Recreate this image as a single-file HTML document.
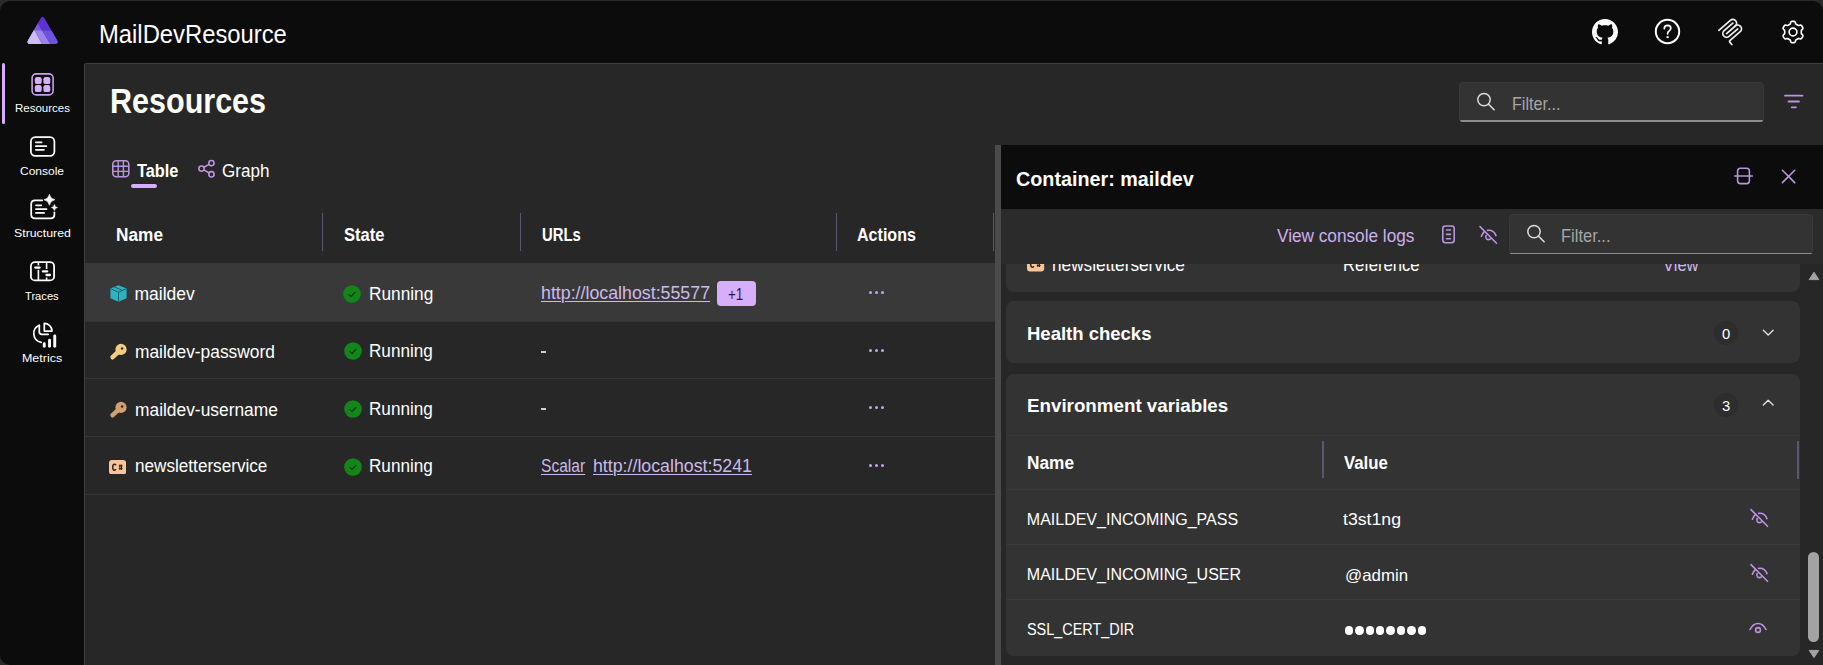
<!DOCTYPE html>
<html><head><meta charset="utf-8">
<style>
html,body{margin:0;padding:0;}
body{width:1823px;height:665px;overflow:hidden;position:relative;background:#2a2a2a;font-family:"Liberation Sans",sans-serif;color:#fff;}
.abs{position:absolute;}
.t{position:absolute;white-space:nowrap;line-height:1;}
.link{text-decoration:underline;text-decoration-thickness:1px;text-underline-offset:2px;}
</style></head>
<body>
<div class="abs" style="left:0px;top:1px;width:1823px;height:664px;background:#0c0c0c;border-radius:10px;"></div>
<div class="abs" style="left:84px;top:63px;width:1739px;height:602px;background:#272727;border-top:1px solid #3d3d3d;border-left:1px solid #3f3f3f;border-top-left-radius:2px;box-sizing:border-box;"></div>
<svg class="abs" style="left:0;top:0" width="70" height="55" viewBox="0 0 70 55">
<defs><clipPath id="tri"><path d="M40.46 18.73 Q42.60 15.00 44.74 18.73 L57.06 40.17 Q59.20 43.90 54.90 43.90 L30.30 43.90 Q26.00 43.90 28.14 40.17 Z"/></clipPath></defs>
<g clip-path="url(#tri)">
<rect x="0" y="0" width="70" height="55" fill="#5a32d6"/>
<path d="M0 0H24L54 50H0Z" fill="#7a5be0"/>
<rect x="0" y="30.6" width="70" height="25" fill="#7152de"/>
<path d="M0 30.6H42.2L54 50H0Z" fill="#9c85ea"/>
<path d="M0 30.6H34.9L45.3 50H0Z" fill="#cbbcf3"/>
<path d="M24 0L54 50M34.9 30.6L45.3 50" stroke="#3d2390" stroke-width="0.6" opacity="0.5"/>
</g></svg>
<div class="t " style="left:99.20px;top:22.39px;font-size:25px;color:#fff;transform:scaleX(0.9521);transform-origin:0 0;">MailDevResource</div>
<svg class="abs" style="left:1591.5px;top:18.5px" width="26" height="26" viewBox="0 0 16 16"><path fill="#ffffff" d="M8 0C3.58 0 0 3.58 0 8c0 3.54 2.29 6.53 5.47 7.59.4.07.55-.17.55-.38 0-.19-.01-.82-.01-1.49-2.01.37-2.53-.49-2.69-.94-.09-.23-.48-.94-.82-1.13-.28-.15-.68-.52-.01-.53.63-.01 1.08.58 1.23.82.72 1.21 1.87.87 2.33.66.07-.52.28-.87.51-1.07-1.78-.2-3.640-.89-3.64-3.950 0-.87.31-1.59.82-2.15-.08-.2-.36-1.02.08-2.12 0 0 .67-.21 2.2.82.64-.18 1.32-.27 2-.27.68 0 1.36.09 2 .27 1.53-1.04 2.2-.82 2.2-.82.44 1.1.16 1.92.08 2.12.51.56.82 1.27.82 2.15 0 3.07-1.87 3.75-3.65 3.95.29.25.54.73.54 1.48 0 1.07-.01 1.93-.01 2.2 0 .21.15.46.55.38A8.013 8.013 0 0016 8c0-4.42-3.58-8-8-8z"/></svg>
<svg class="abs" style="left:1653px;top:17px" width="29" height="29" viewBox="0 0 29 29"><circle cx="14.5" cy="14.5" r="11.7" fill="none" stroke="#ffffff" stroke-width="2"/>
<path d="M11.3 11.5 Q11.4 8.3 14.6 8.3 Q17.8 8.4 17.8 11.1 Q17.8 12.9 16.1 14 Q14.6 14.9 14.6 16.8" fill="none" stroke="#ffffff" stroke-width="1.75" stroke-linecap="round"/>
<circle cx="14.6" cy="20.1" r="1.2" fill="#ffffff"/></svg>
<svg class="abs" style="left:1710px;top:12px" width="40" height="40" viewBox="1710 12 40 40"><g transform="translate(1719.1 30.1) rotate(-40.87)" fill="none" stroke="#ececec" stroke-width="1.75" stroke-linecap="round" stroke-linejoin="round"><path d="M-0.3 0H14.9A3.75 3.75 0 0 1 14.9 7.5A3.75 3.75 0 0 1 14.9 15H1.6Q0.2 15 0.2 16.4V19.2"/><path d="M14.9 7.5H3.4"/><path d="M14.9 3.75H3.4A3.75 3.75 0 0 0 3.4 11.25H14.9"/></g></svg>
<svg class="abs" style="left:1780.5px;top:19.5px" width="24" height="24" viewBox="0 0 24 24"><path fill="none" stroke="#ffffff" stroke-width="1.65" stroke-linejoin="round" d="M20.30 12.00 L20.29 12.43 L20.28 12.87 L20.29 13.31 L20.50 13.81 L21.18 14.46 L21.80 15.19 L21.90 15.80 L21.75 16.34 L21.53 16.86 L21.27 17.35 L20.97 17.83 L20.64 18.28 L20.24 18.67 L19.66 18.90 L18.72 18.72 L17.82 18.46 L17.28 18.52 L16.89 18.73 L16.52 18.96 L16.15 19.19 L15.77 19.40 L15.38 19.60 L15.01 19.84 L14.69 20.27 L14.46 21.18 L14.14 22.08 L13.66 22.47 L13.12 22.62 L12.56 22.68 L12.00 22.70 L11.44 22.68 L10.88 22.62 L10.34 22.47 L9.86 22.08 L9.54 21.18 L9.31 20.27 L8.99 19.84 L8.62 19.60 L8.23 19.40 L7.85 19.19 L7.48 18.96 L7.11 18.73 L6.72 18.52 L6.18 18.46 L5.28 18.72 L4.34 18.90 L3.76 18.67 L3.36 18.28 L3.03 17.83 L2.73 17.35 L2.47 16.86 L2.25 16.34 L2.10 15.80 L2.20 15.19 L2.82 14.46 L3.50 13.81 L3.71 13.31 L3.72 12.87 L3.71 12.43 L3.70 12.00 L3.71 11.57 L3.72 11.13 L3.71 10.69 L3.50 10.19 L2.82 9.54 L2.20 8.81 L2.10 8.20 L2.25 7.66 L2.47 7.14 L2.73 6.65 L3.03 6.17 L3.36 5.72 L3.76 5.33 L4.34 5.10 L5.28 5.28 L6.18 5.54 L6.72 5.48 L7.11 5.27 L7.48 5.04 L7.85 4.81 L8.23 4.60 L8.62 4.40 L8.99 4.16 L9.31 3.73 L9.54 2.82 L9.86 1.92 L10.34 1.53 L10.88 1.38 L11.44 1.32 L12.00 1.30 L12.56 1.32 L13.12 1.38 L13.66 1.53 L14.14 1.92 L14.46 2.82 L14.69 3.73 L15.01 4.16 L15.38 4.40 L15.77 4.60 L16.15 4.81 L16.52 5.04 L16.89 5.27 L17.28 5.48 L17.82 5.54 L18.72 5.28 L19.66 5.10 L20.24 5.33 L20.64 5.72 L20.97 6.17 L21.27 6.65 L21.53 7.14 L21.75 7.66 L21.90 8.20 L21.80 8.81 L21.18 9.54 L20.50 10.19 L20.29 10.69 L20.28 11.13 L20.29 11.57Z"/><circle cx="12" cy="12" r="3.9" fill="none" stroke="#ffffff" stroke-width="1.65"/></svg>
<div class="abs" style="left:2px;top:63px;width:3px;height:61px;background:#d6aefc;border-radius:2px;"></div>
<svg class="abs" style="left:25px;top:66px" width="35" height="35" viewBox="25 66 35 35"><rect x="32.1" y="73.9" width="21" height="21" rx="4.2" fill="none" stroke="#c9a0ee" stroke-width="1.6"/>
<rect x="34.8" y="77.1" width="6.9" height="7" rx="2.2" fill="#d6aefc"/><rect x="43.4" y="77.1" width="6.9" height="7" rx="2.2" fill="#d6aefc"/>
<rect x="34.8" y="85.1" width="6.9" height="7" rx="2.2" fill="#d6aefc"/><rect x="43.4" y="85.1" width="6.9" height="7" rx="2.2" fill="#d6aefc"/></svg>
<div class="t " style="left:15.00px;top:103.42px;font-size:11.5px;color:#fff;">Resources</div>
<svg class="abs" style="left:25px;top:128px" width="35" height="35" viewBox="25 128 35 35"><rect x="30.9" y="137.1" width="23.5" height="18.7" rx="4.3" fill="none" stroke="#ffffff" stroke-width="1.75"/>
<path d="M35.9 142.3H41.6M35.9 146.2H46.3M35.9 149.8H43.9" stroke="#ffffff" stroke-width="1.75" stroke-linecap="round"/></svg>
<div class="t " style="left:20.30px;top:165.62px;font-size:11.5px;color:#fff;transform:scaleX(1.0425);transform-origin:0 0;">Console</div>
<svg class="abs" style="left:25px;top:190px" width="37" height="37" viewBox="25 190 37 37"><path d="M42.2 200.4H35Q31.2 200.4 31.2 204.2V214.5Q31.2 218.3 35 218.3H50.6Q54.4 218.3 54.4 214.5V212.3" fill="none" stroke="#ffffff" stroke-width="1.75" stroke-linecap="round"/>
<path d="M36 205.3H41.3M36 209.2H46.5M36 212.9H44.1" stroke="#ffffff" stroke-width="1.75" stroke-linecap="round"/>
<path d="M49.4 194.3Q50.3 198.9 54.9 199.8Q50.3 200.7 49.4 205.3Q48.5 200.7 43.9 199.8Q48.5 198.9 49.4 194.3Z" fill="#ffffff" stroke="#ffffff" stroke-width="0.6" stroke-linejoin="round"/>
<path d="M54.4 204.4Q54.9 207 57.5 207.5Q54.9 208 54.4 210.6Q53.9 208 51.3 207.5Q53.9 207 54.4 204.4Z" fill="#ffffff" stroke="#ffffff" stroke-width="0.5" stroke-linejoin="round"/></svg>
<div class="t " style="left:13.50px;top:228.32px;font-size:11.5px;color:#fff;transform:scaleX(1.0721);transform-origin:0 0;">Structured</div>
<svg class="abs" style="left:25px;top:255px" width="35" height="35" viewBox="25 255 35 35"><rect x="30.9" y="262.2" width="23.2" height="18.2" rx="4" fill="none" stroke="#ffffff" stroke-width="1.8"/>
<path d="M38.4 262.2V265.6M38.4 269.7V280.4M46.6 262.2V268.9M46.6 277.4V280.4" stroke="#ffffff" stroke-width="1.6"/>
<path d="M35.3 267.6H39.6M42.9 271.3H47.2M46.5 275H49.9" stroke="#ffffff" stroke-width="2.3" stroke-linecap="round"/></svg>
<div class="t " style="left:25.00px;top:290.62px;font-size:11.5px;color:#fff;transform:scaleX(0.9703);transform-origin:0 0;">Traces</div>
<svg class="abs" style="left:25px;top:315px" width="37" height="37" viewBox="25 315 37 37"><path d="M39.3 325.3A8.9 8.9 0 0 0 41.2 342.3" fill="none" stroke="#ffffff" stroke-width="1.75" stroke-linecap="round"/>
<path d="M39.3 325.3V331.8Q39.3 334.3 41.8 334.3H48.2" fill="none" stroke="#ffffff" stroke-width="1.75" stroke-linecap="round" stroke-linejoin="round"/>
<path d="M44.3 331V323.4A7.7 7.7 0 0 1 52 331Z" fill="none" stroke="#ffffff" stroke-width="1.75" stroke-linejoin="round"/>
<rect x="42.8" y="342.2" width="2.9" height="5.6" rx="1.45" fill="#ffffff"/><rect x="48.1" y="338.8" width="2.9" height="9" rx="1.45" fill="#ffffff"/><rect x="53.3" y="334.5" width="2.9" height="13.3" rx="1.45" fill="#ffffff"/></svg>
<div class="t " style="left:22.10px;top:353.02px;font-size:11.5px;color:#fff;transform:scaleX(1.0829);transform-origin:0 0;">Metrics</div>
<div class="t " style="left:110.20px;top:84.30px;font-size:35.5px;color:#fff;font-weight:bold;transform:scaleX(0.8597);transform-origin:0 0;">Resources</div>
<div class="abs" style="left:1459px;top:81.5px;width:304.5px;height:40.2px;background:#333333;border-radius:4px;border:1px solid #3a3a3a;box-sizing:border-box;"></div>
<div class="abs" style="left:1460px;top:120.2px;width:302.5px;height:1.3999999999999915px;background:#8c8c8c;border-radius:0 0 3px 3px;"></div>
<svg class="abs" style="left:1475px;top:91px" width="22" height="22" viewBox="0 0 22 22"><circle cx="9" cy="8.6" r="6.2" fill="none" stroke="#dcdcdc" stroke-width="1.5"/><path d="M13.6 13.2L19.1 18.8" stroke="#dcdcdc" stroke-width="1.6" stroke-linecap="round"/></svg>
<div class="t " style="left:1511.60px;top:95.64px;font-size:17.5px;color:#a6a6a6;transform:scaleX(0.9219);transform-origin:0 0;">Filter...</div>
<svg class="abs" style="left:1783px;top:93px" width="22" height="17" viewBox="0 0 22 17"><path d="M2 2.7h17.5M5.5 8.5h10.5M8.7 14.3h4.2" stroke="#bb93de" stroke-width="1.8" stroke-linecap="round"/></svg>
<svg class="abs" style="left:111px;top:159px" width="20" height="20" viewBox="0 0 20 20"><rect x="1.8" y="1.8" width="16" height="16" rx="3.5" fill="none" stroke="#bb93de" stroke-width="1.6"/>
<path d="M7.2 1.8V17.8M12.4 1.8V17.8M1.8 7.2H17.8M1.8 12.4H17.8" stroke="#bb93de" stroke-width="1.4"/></svg>
<div class="t " style="left:136.50px;top:162.84px;font-size:17.5px;color:#fff;font-weight:bold;transform:scaleX(0.9336);transform-origin:0 0;">Table</div>
<div class="abs" style="left:131px;top:184px;width:26px;height:4px;background:#d6aefc;border-radius:2px;"></div>
<svg class="abs" style="left:197px;top:158px" width="20" height="22" viewBox="0 0 20 22"><circle cx="14.45" cy="5.1" r="2.65" fill="none" stroke="#bb93de" stroke-width="1.6"/><circle cx="4.5" cy="10.6" r="2.65" fill="none" stroke="#bb93de" stroke-width="1.6"/><circle cx="14.45" cy="16.3" r="2.65" fill="none" stroke="#bb93de" stroke-width="1.6"/>
<path d="M6.9 9.3L12.1 6.4M6.9 11.9L12.1 15" stroke="#bb93de" stroke-width="1.6"/></svg>
<div class="t " style="left:222.40px;top:162.94px;font-size:17.5px;color:#fff;transform:scaleX(0.9743);transform-origin:0 0;">Graph</div>
<div class="t " style="left:115.60px;top:226.94px;font-size:17.5px;color:#fff;font-weight:bold;transform:scaleX(0.9856);transform-origin:0 0;">Name</div>
<div class="t " style="left:343.50px;top:226.94px;font-size:17.5px;color:#fff;font-weight:bold;transform:scaleX(0.9442);transform-origin:0 0;">State</div>
<div class="t " style="left:541.50px;top:226.94px;font-size:17.5px;color:#fff;font-weight:bold;transform:scaleX(0.8495);transform-origin:0 0;">URLs</div>
<div class="t " style="left:857.30px;top:226.94px;font-size:17.5px;color:#fff;font-weight:bold;transform:scaleX(0.9183);transform-origin:0 0;">Actions</div>
<div class="abs" style="left:322.1px;top:213px;width:1.1999999999999886px;height:37.5px;background:#5e5572;"></div>
<div class="abs" style="left:520.1px;top:213px;width:1.1999999999999318px;height:37.5px;background:#5e5572;"></div>
<div class="abs" style="left:836.1px;top:213px;width:1.1999999999999318px;height:37.5px;background:#5e5572;"></div>
<div class="abs" style="left:993.1px;top:213px;width:1.1999999999999318px;height:37.5px;background:#5e5572;"></div>
<div class="abs" style="left:85px;top:263px;width:910px;height:58px;background:#393939;"></div>
<div class="abs" style="left:85px;top:321px;width:910px;height:1.3000000000000114px;background:#353535;"></div>
<div class="abs" style="left:85px;top:378px;width:910px;height:1.3000000000000114px;background:#353535;"></div>
<div class="abs" style="left:85px;top:436px;width:910px;height:1.3000000000000114px;background:#353535;"></div>
<div class="abs" style="left:85px;top:493.5px;width:910px;height:1.3000000000000114px;background:#353535;"></div>
<svg class="abs" style="left:109px;top:284px" width="19" height="19" viewBox="0 0 19 19"><path d="M9.5 1.2L17.6 4.6V14.2L9.5 17.8L1.4 14.2V4.6Z" fill="#2bb3c0"/><path d="M1.4 4.6L9.5 8.2L17.6 4.6M9.5 8.2V17.8" fill="none" stroke="#1b5f68" stroke-width="1"/><path d="M5.2 2.9L13.3 6.4" stroke="#1b5f68" stroke-width="0.9"/></svg>
<div class="t " style="left:134.50px;top:286.44px;font-size:17.5px;color:#fff;">maildev</div>
<svg class="abs" style="left:343.4px;top:284.6px" width="18" height="18" viewBox="0 0 18 18"><circle cx="9" cy="9" r="8.8" fill="#13861a"/><path d="M5.9 9.6L7.9 11.5L12 7.4" fill="none" stroke="#0b3f0d" stroke-width="1.3" stroke-linecap="round" stroke-linejoin="round"/></svg>
<div class="t " style="left:368.70px;top:285.94px;font-size:17.5px;color:#fff;transform:scaleX(0.9864);transform-origin:0 0;">Running</div>
<div class="t link" style="left:540.60px;top:284.94px;font-size:17.5px;color:#cdb9ea;transform:scaleX(1.0160);transform-origin:0 0;">http://localhost:55577</div>
<div class="abs" style="left:716.6px;top:281.4px;width:39.89999999999998px;height:24.80000000000001px;background:#d6aefc;border-radius:4px;"></div>
<div class="t " style="left:728.00px;top:286.61px;font-size:16px;color:#2b1d3d;transform:scaleX(0.8388);transform-origin:0 0;">+1</div>
<div class="abs" style="left:869.0px;top:290.5px;width:3.0px;height:3.0px;background:#c8a2ec;border-radius:50%;"></div>
<div class="abs" style="left:875.2px;top:290.5px;width:3.0px;height:3.0px;background:#c8a2ec;border-radius:50%;"></div>
<div class="abs" style="left:881.4px;top:290.5px;width:3.0px;height:3.0px;background:#c8a2ec;border-radius:50%;"></div>
<svg class="abs" style="left:108.5px;top:342px" width="20" height="20" viewBox="0 0 20 20"><circle cx="12" cy="7.4" r="5.6" fill="#f0d080"/><path d="M9.5 9.6L3.6 15.2" stroke="#f0d080" stroke-width="4.6" stroke-linecap="round"/><path d="M7.5 9.5L10.2 12.2" stroke="#f0d080" stroke-width="3"/><circle cx="13.1" cy="6.5" r="1.25" fill="#3a2a10"/></svg>
<div class="t " style="left:134.60px;top:343.54px;font-size:17.5px;color:#fff;transform:scaleX(0.9918);transform-origin:0 0;">maildev-password</div>
<svg class="abs" style="left:343.6px;top:342.3px" width="18" height="18" viewBox="0 0 18 18"><circle cx="9" cy="9" r="8.8" fill="#13861a"/><path d="M5.9 9.6L7.9 11.5L12 7.4" fill="none" stroke="#0b3f0d" stroke-width="1.3" stroke-linecap="round" stroke-linejoin="round"/></svg>
<div class="t " style="left:369.20px;top:343.24px;font-size:17.5px;color:#fff;transform:scaleX(0.9787);transform-origin:0 0;">Running</div>
<div class="abs" style="left:540.8px;top:351.2px;width:5.600000000000023px;height:1.5px;background:#cfcfcf;"></div>
<div class="abs" style="left:869.0px;top:348.5px;width:3.0px;height:3.0px;background:#c8a2ec;border-radius:50%;"></div>
<div class="abs" style="left:875.2px;top:348.5px;width:3.0px;height:3.0px;background:#c8a2ec;border-radius:50%;"></div>
<div class="abs" style="left:881.4px;top:348.5px;width:3.0px;height:3.0px;background:#c8a2ec;border-radius:50%;"></div>
<svg class="abs" style="left:108.5px;top:399.6px" width="20" height="20" viewBox="0 0 20 20"><circle cx="12" cy="7.4" r="5.6" fill="#d19f72"/><path d="M9.5 9.6L3.6 15.2" stroke="#d19f72" stroke-width="4.6" stroke-linecap="round"/><path d="M7.5 9.5L10.2 12.2" stroke="#d19f72" stroke-width="3"/><circle cx="13.1" cy="6.5" r="1.25" fill="#3a2a10"/></svg>
<div class="t " style="left:134.60px;top:401.54px;font-size:17.5px;color:#fff;transform:scaleX(0.9928);transform-origin:0 0;">maildev-username</div>
<svg class="abs" style="left:343.6px;top:400px" width="18" height="18" viewBox="0 0 18 18"><circle cx="9" cy="9" r="8.8" fill="#13861a"/><path d="M5.9 9.6L7.9 11.5L12 7.4" fill="none" stroke="#0b3f0d" stroke-width="1.3" stroke-linecap="round" stroke-linejoin="round"/></svg>
<div class="t " style="left:369.20px;top:400.94px;font-size:17.5px;color:#fff;transform:scaleX(0.9787);transform-origin:0 0;">Running</div>
<div class="abs" style="left:540.8px;top:408px;width:5.600000000000023px;height:1.5px;background:#cfcfcf;"></div>
<div class="abs" style="left:869.0px;top:406.1px;width:3.0px;height:3.0px;background:#c8a2ec;border-radius:50%;"></div>
<div class="abs" style="left:875.2px;top:406.1px;width:3.0px;height:3.0px;background:#c8a2ec;border-radius:50%;"></div>
<div class="abs" style="left:881.4px;top:406.1px;width:3.0px;height:3.0px;background:#c8a2ec;border-radius:50%;"></div>
<svg class="abs" style="left:109.3px;top:459.8px" width="17.2" height="14.5" viewBox="0 0 17.2 14.5"><rect x="0" y="0" width="17.2" height="14.5" rx="3" fill="#f8c49a"/><path d="M7 5.2Q6.6 4.3 5.5 4.3Q3.7 4.3 3.7 7.25Q3.7 10.2 5.5 10.2Q6.6 10.2 7 9.3" fill="none" stroke="#3b2616" stroke-width="1.5"/><path d="M9.8 5.9H13.6M9.8 8.5H13.6M10.9 4.4V10.1M12.5 4.4V10.1" stroke="#3b2616" stroke-width="1.1"/></svg>
<div class="t " style="left:134.60px;top:457.84px;font-size:17.5px;color:#fff;transform:scaleX(0.9794);transform-origin:0 0;">newsletterservice</div>
<svg class="abs" style="left:343.6px;top:457.5px" width="18" height="18" viewBox="0 0 18 18"><circle cx="9" cy="9" r="8.8" fill="#13861a"/><path d="M5.9 9.6L7.9 11.5L12 7.4" fill="none" stroke="#0b3f0d" stroke-width="1.3" stroke-linecap="round" stroke-linejoin="round"/></svg>
<div class="t " style="left:369.20px;top:458.44px;font-size:17.5px;color:#fff;transform:scaleX(0.9787);transform-origin:0 0;">Running</div>
<div class="t link" style="left:540.60px;top:458.44px;font-size:17.5px;color:#cdb9ea;transform:scaleX(0.8909);transform-origin:0 0;">Scalar</div>
<div class="t link" style="left:592.50px;top:458.44px;font-size:17.5px;color:#cdb9ea;transform:scaleX(1.0145);transform-origin:0 0;">http://localhost:5241</div>
<div class="abs" style="left:869.0px;top:463.9px;width:3.0px;height:3.0px;background:#c8a2ec;border-radius:50%;"></div>
<div class="abs" style="left:875.2px;top:463.9px;width:3.0px;height:3.0px;background:#c8a2ec;border-radius:50%;"></div>
<div class="abs" style="left:881.4px;top:463.9px;width:3.0px;height:3.0px;background:#c8a2ec;border-radius:50%;"></div>
<div class="abs" style="left:995px;top:144.6px;width:6px;height:520.4px;background:#4b4b4b;"></div>
<div class="abs" style="left:1001px;top:144.6px;width:822px;height:520.4px;background:#272727;"></div>
<div class="abs" style="left:1001px;top:144.6px;width:822px;height:64.4px;background:#0c0c0c;"></div>
<div class="t " style="left:1015.80px;top:169.84px;font-size:19.5px;color:#fff;font-weight:bold;transform:scaleX(1.0125);transform-origin:0 0;">Container: maildev</div>
<svg class="abs" style="left:1730px;top:163px" width="26" height="26" viewBox="1730 163 26 26"><rect x="1737.6" y="168.2" width="11.8" height="15.4" rx="2.8" fill="none" stroke="#bb93de" stroke-width="1.6"/><path d="M1734.8 176H1752.3" stroke="#bb93de" stroke-width="1.6" stroke-linecap="round"/></svg>
<svg class="abs" style="left:1778px;top:166px" width="21" height="21" viewBox="1778 166 21 21"><path d="M1782.4 170.3L1794.7 182.6M1794.7 170.3L1782.4 182.6" stroke="#bb93de" stroke-width="1.6" stroke-linecap="round"/></svg>
<div class="abs" style="left:1001px;top:209px;width:822px;height:55px;background:#2b2b2b;"></div>
<div class="t " style="left:1277.00px;top:227.94px;font-size:17.5px;color:#cdb0ec;transform:scaleX(0.9833);transform-origin:0 0;">View console logs</div>
<svg class="abs" style="left:1438px;top:222px" width="22" height="25" viewBox="1438 222 22 25"><rect x="1442.8" y="226" width="11.4" height="16.7" rx="2.6" fill="none" stroke="#bb93de" stroke-width="1.6"/><path d="M1446.5 230H1450.5M1446.5 234.4H1450.5M1446.5 238.7H1450.5" stroke="#bb93de" stroke-width="1.6" stroke-linecap="round"/></svg>
<svg class="abs" style="left:1478px;top:224.5px" width="20" height="20" viewBox="0 0 20 20"><path d="M2 1.6L18.5 18.3" stroke="#bb93de" stroke-width="1.6" stroke-linecap="round"/><path d="M3.4 11.2Q4.4 8.4 6.4 6.6M9.6 5.4Q15.6 4.6 18 10.6" fill="none" stroke="#bb93de" stroke-width="1.6" stroke-linecap="round"/><path d="M8.2 10.4Q7.2 12.4 8.4 13.8Q10.4 15.4 12.4 13.9" fill="none" stroke="#bb93de" stroke-width="1.6" stroke-linecap="round"/></svg>
<div class="abs" style="left:1508.6px;top:214.3px;width:304.20000000000005px;height:40.099999999999994px;background:#333333;border-radius:4px;border:1px solid #3a3a3a;box-sizing:border-box;"></div>
<div class="abs" style="left:1509.6px;top:252.9px;width:302.20000000000005px;height:1.4000000000000057px;background:#8c8c8c;border-radius:0 0 3px 3px;"></div>
<svg class="abs" style="left:1525px;top:223px" width="22" height="22" viewBox="0 0 22 22"><circle cx="9" cy="8.6" r="6.2" fill="none" stroke="#dcdcdc" stroke-width="1.5"/><path d="M13.6 13.2L19.1 18.8" stroke="#dcdcdc" stroke-width="1.6" stroke-linecap="round"/></svg>
<div class="t " style="left:1561.00px;top:227.94px;font-size:17.5px;color:#a6a6a6;transform:scaleX(0.9429);transform-origin:0 0;">Filter...</div>
<div class="abs" style="left:1001px;top:264px;width:822px;height:401px;overflow:hidden;">
<div class="abs" style="left:4.5px;top:-34px;width:794.0px;height:62px;background:#333333;border-radius:8px;"></div>
<svg class="abs" style="left:26.40000000000009px;top:-6.800000000000011px" width="17.2" height="14.5" viewBox="0 0 17.2 14.5"><rect x="0" y="0" width="17.2" height="14.5" rx="3" fill="#f8c49a"/><path d="M7 5.2Q6.6 4.3 5.5 4.3Q3.7 4.3 3.7 7.25Q3.7 10.2 5.5 10.2Q6.6 10.2 7 9.3" fill="none" stroke="#3b2616" stroke-width="1.5"/><path d="M9.8 5.9H13.6M9.8 8.5H13.6M10.9 4.4V10.1M12.5 4.4V10.1" stroke="#3b2616" stroke-width="1.1"/></svg>
<div class="t " style="left:50.80px;top:-6.76px;font-size:17.5px;color:#fff;transform:scaleX(0.9831);transform-origin:0 0;">newsletterservice</div>
<div class="t " style="left:342.40px;top:-6.76px;font-size:17.5px;color:#fff;transform:scaleX(0.9485);transform-origin:0 0;">Reference</div>
<div class="t " style="left:662.00px;top:-6.76px;font-size:17.5px;color:#cdb9ea;transform:scaleX(0.9435);transform-origin:0 0;">View</div>
<div class="abs" style="left:4.5px;top:37.2px;width:794.0px;height:62.099999999999994px;background:#333333;border-radius:8px;"></div>
<div class="t " style="left:26.00px;top:61.39px;font-size:18.5px;color:#fff;font-weight:bold;">Health checks</div>
<div class="abs" style="left:713px;top:56.6px;width:24.399999999999977px;height:24.199999999999996px;background:#2d2d2d;border-radius:50%;"></div>
<div class="t " style="left:721.40px;top:62.23px;font-size:15.5px;color:#fff;transform:scaleX(0.9532);transform-origin:0 0;">0</div>
<svg class="abs" style="left:760px;top:64px" width="14" height="9" viewBox="0 0 14 9"><path d="M2.3 2.2L7.2 7L12.1 2.2" fill="none" stroke="#e2e2e2" stroke-width="1.35" stroke-linecap="round" stroke-linejoin="round"/></svg>
<div class="abs" style="left:4.5px;top:109.5px;width:794.0px;height:282.7px;background:#333333;border-radius:8px;"></div>
<div class="t " style="left:25.50px;top:133.19px;font-size:18.5px;color:#fff;font-weight:bold;transform:scaleX(1.0140);transform-origin:0 0;">Environment variables</div>
<div class="abs" style="left:713px;top:128.6px;width:24.399999999999977px;height:24.200000000000017px;background:#2d2d2d;border-radius:50%;"></div>
<div class="t " style="left:721.40px;top:134.23px;font-size:15.5px;color:#fff;transform:scaleX(0.9532);transform-origin:0 0;">3</div>
<svg class="abs" style="left:760px;top:134px" width="14" height="9" viewBox="0 0 14 9"><path d="M2.3 7L7.2 2.3L12.1 7" fill="none" stroke="#e2e2e2" stroke-width="1.35" stroke-linecap="round" stroke-linejoin="round"/></svg>
<div class="abs" style="left:4.5px;top:171px;width:794.0px;height:1px;background:#383838;"></div>
<div class="t " style="left:25.50px;top:190.64px;font-size:17.5px;color:#fff;font-weight:bold;transform:scaleX(0.9856);transform-origin:0 0;">Name</div>
<div class="t " style="left:343.00px;top:190.64px;font-size:17.5px;color:#fff;font-weight:bold;transform:scaleX(0.9593);transform-origin:0 0;">Value</div>
<div class="abs" style="left:321px;top:177.3px;width:1.5px;height:36.69999999999999px;background:#5e5572;"></div>
<div class="abs" style="left:796px;top:177.3px;width:1.5px;height:37.29999999999998px;background:#5e5572;"></div>
<div class="abs" style="left:4.5px;top:225px;width:794.0px;height:1.1999999999999886px;background:#3a3a3a;"></div>
<div class="abs" style="left:4.5px;top:280.3px;width:794.0px;height:1.1999999999999886px;background:#3a3a3a;"></div>
<div class="abs" style="left:4.5px;top:334.8px;width:794.0px;height:1.1999999999999886px;background:#3a3a3a;"></div>
<div class="t " style="left:25.80px;top:247.91px;font-size:16px;color:#fff;">MAILDEV_INCOMING_PASS</div>
<div class="t " style="left:342.00px;top:247.48px;font-size:16.5px;color:#fff;transform:scaleX(1.0717);transform-origin:0 0;">t3st1ng</div>
<div class="t " style="left:25.80px;top:303.21px;font-size:16px;color:#fff;">MAILDEV_INCOMING_USER</div>
<div class="t " style="left:343.50px;top:302.78px;font-size:16.5px;color:#fff;transform:scaleX(1.0225);transform-origin:0 0;">@admin</div>
<div class="t " style="left:25.80px;top:357.91px;font-size:16px;color:#fff;transform:scaleX(0.9017);transform-origin:0 0;">SSL_CERT_DIR</div>
<div class="abs" style="left:343.7px;top:362.0px;width:8.600000000000023px;height:8.600000000000023px;background:#ffffff;border-radius:50%;"></div>
<div class="abs" style="left:354.1px;top:362.0px;width:8.599999999999966px;height:8.600000000000023px;background:#ffffff;border-radius:50%;"></div>
<div class="abs" style="left:364.5px;top:362.0px;width:8.600000000000023px;height:8.600000000000023px;background:#ffffff;border-radius:50%;"></div>
<div class="abs" style="left:374.9px;top:362.0px;width:8.600000000000023px;height:8.600000000000023px;background:#ffffff;border-radius:50%;"></div>
<div class="abs" style="left:385.3px;top:362.0px;width:8.599999999999966px;height:8.600000000000023px;background:#ffffff;border-radius:50%;"></div>
<div class="abs" style="left:395.7px;top:362.0px;width:8.600000000000023px;height:8.600000000000023px;background:#ffffff;border-radius:50%;"></div>
<div class="abs" style="left:406.1px;top:362.0px;width:8.599999999999966px;height:8.600000000000023px;background:#ffffff;border-radius:50%;"></div>
<div class="abs" style="left:416.5px;top:362.0px;width:8.600000000000023px;height:8.600000000000023px;background:#ffffff;border-radius:50%;"></div>
<svg class="abs" style="left:747.5px;top:243.5px" width="20" height="20" viewBox="0 0 20 20"><path d="M2 1.6L18.5 18.3" stroke="#bb93de" stroke-width="1.6" stroke-linecap="round"/><path d="M3.4 11.2Q4.4 8.4 6.4 6.6M9.6 5.4Q15.6 4.6 18 10.6" fill="none" stroke="#bb93de" stroke-width="1.6" stroke-linecap="round"/><path d="M8.2 10.4Q7.2 12.4 8.4 13.8Q10.4 15.4 12.4 13.9" fill="none" stroke="#bb93de" stroke-width="1.6" stroke-linecap="round"/></svg>
<svg class="abs" style="left:747.5px;top:298.5px" width="20" height="20" viewBox="0 0 20 20"><path d="M2 1.6L18.5 18.3" stroke="#bb93de" stroke-width="1.6" stroke-linecap="round"/><path d="M3.4 11.2Q4.4 8.4 6.4 6.6M9.6 5.4Q15.6 4.6 18 10.6" fill="none" stroke="#bb93de" stroke-width="1.6" stroke-linecap="round"/><path d="M8.2 10.4Q7.2 12.4 8.4 13.8Q10.4 15.4 12.4 13.9" fill="none" stroke="#bb93de" stroke-width="1.6" stroke-linecap="round"/></svg>
<svg class="abs" style="left:747px;top:356.5px" width="20" height="14" viewBox="0 0 20 14"><path d="M2 8.5Q5 2.5 10 2.5Q15 2.5 18 8.5" fill="none" stroke="#bb93de" stroke-width="1.6" stroke-linecap="round"/><circle cx="10" cy="9" r="2.4" fill="none" stroke="#bb93de" stroke-width="1.6"/></svg>
</div>
<svg class="abs" style="left:1808px;top:271px" width="12" height="10" viewBox="0 0 12 10"><path d="M6 1.2L10.8 8.6H1.2Z" fill="#a3a3a3" stroke="#a3a3a3" stroke-width="1" stroke-linejoin="round"/></svg>
<div class="abs" style="left:1808.3px;top:552.4px;width:11.200000000000045px;height:89.39999999999998px;background:#a3a3a3;border-radius:6px;"></div>
<svg class="abs" style="left:1808px;top:649px" width="12" height="10" viewBox="0 0 12 10"><path d="M6 8.6L10.8 1.4H1.2Z" fill="#a3a3a3" stroke="#a3a3a3" stroke-width="1" stroke-linejoin="round"/></svg>
</body></html>
